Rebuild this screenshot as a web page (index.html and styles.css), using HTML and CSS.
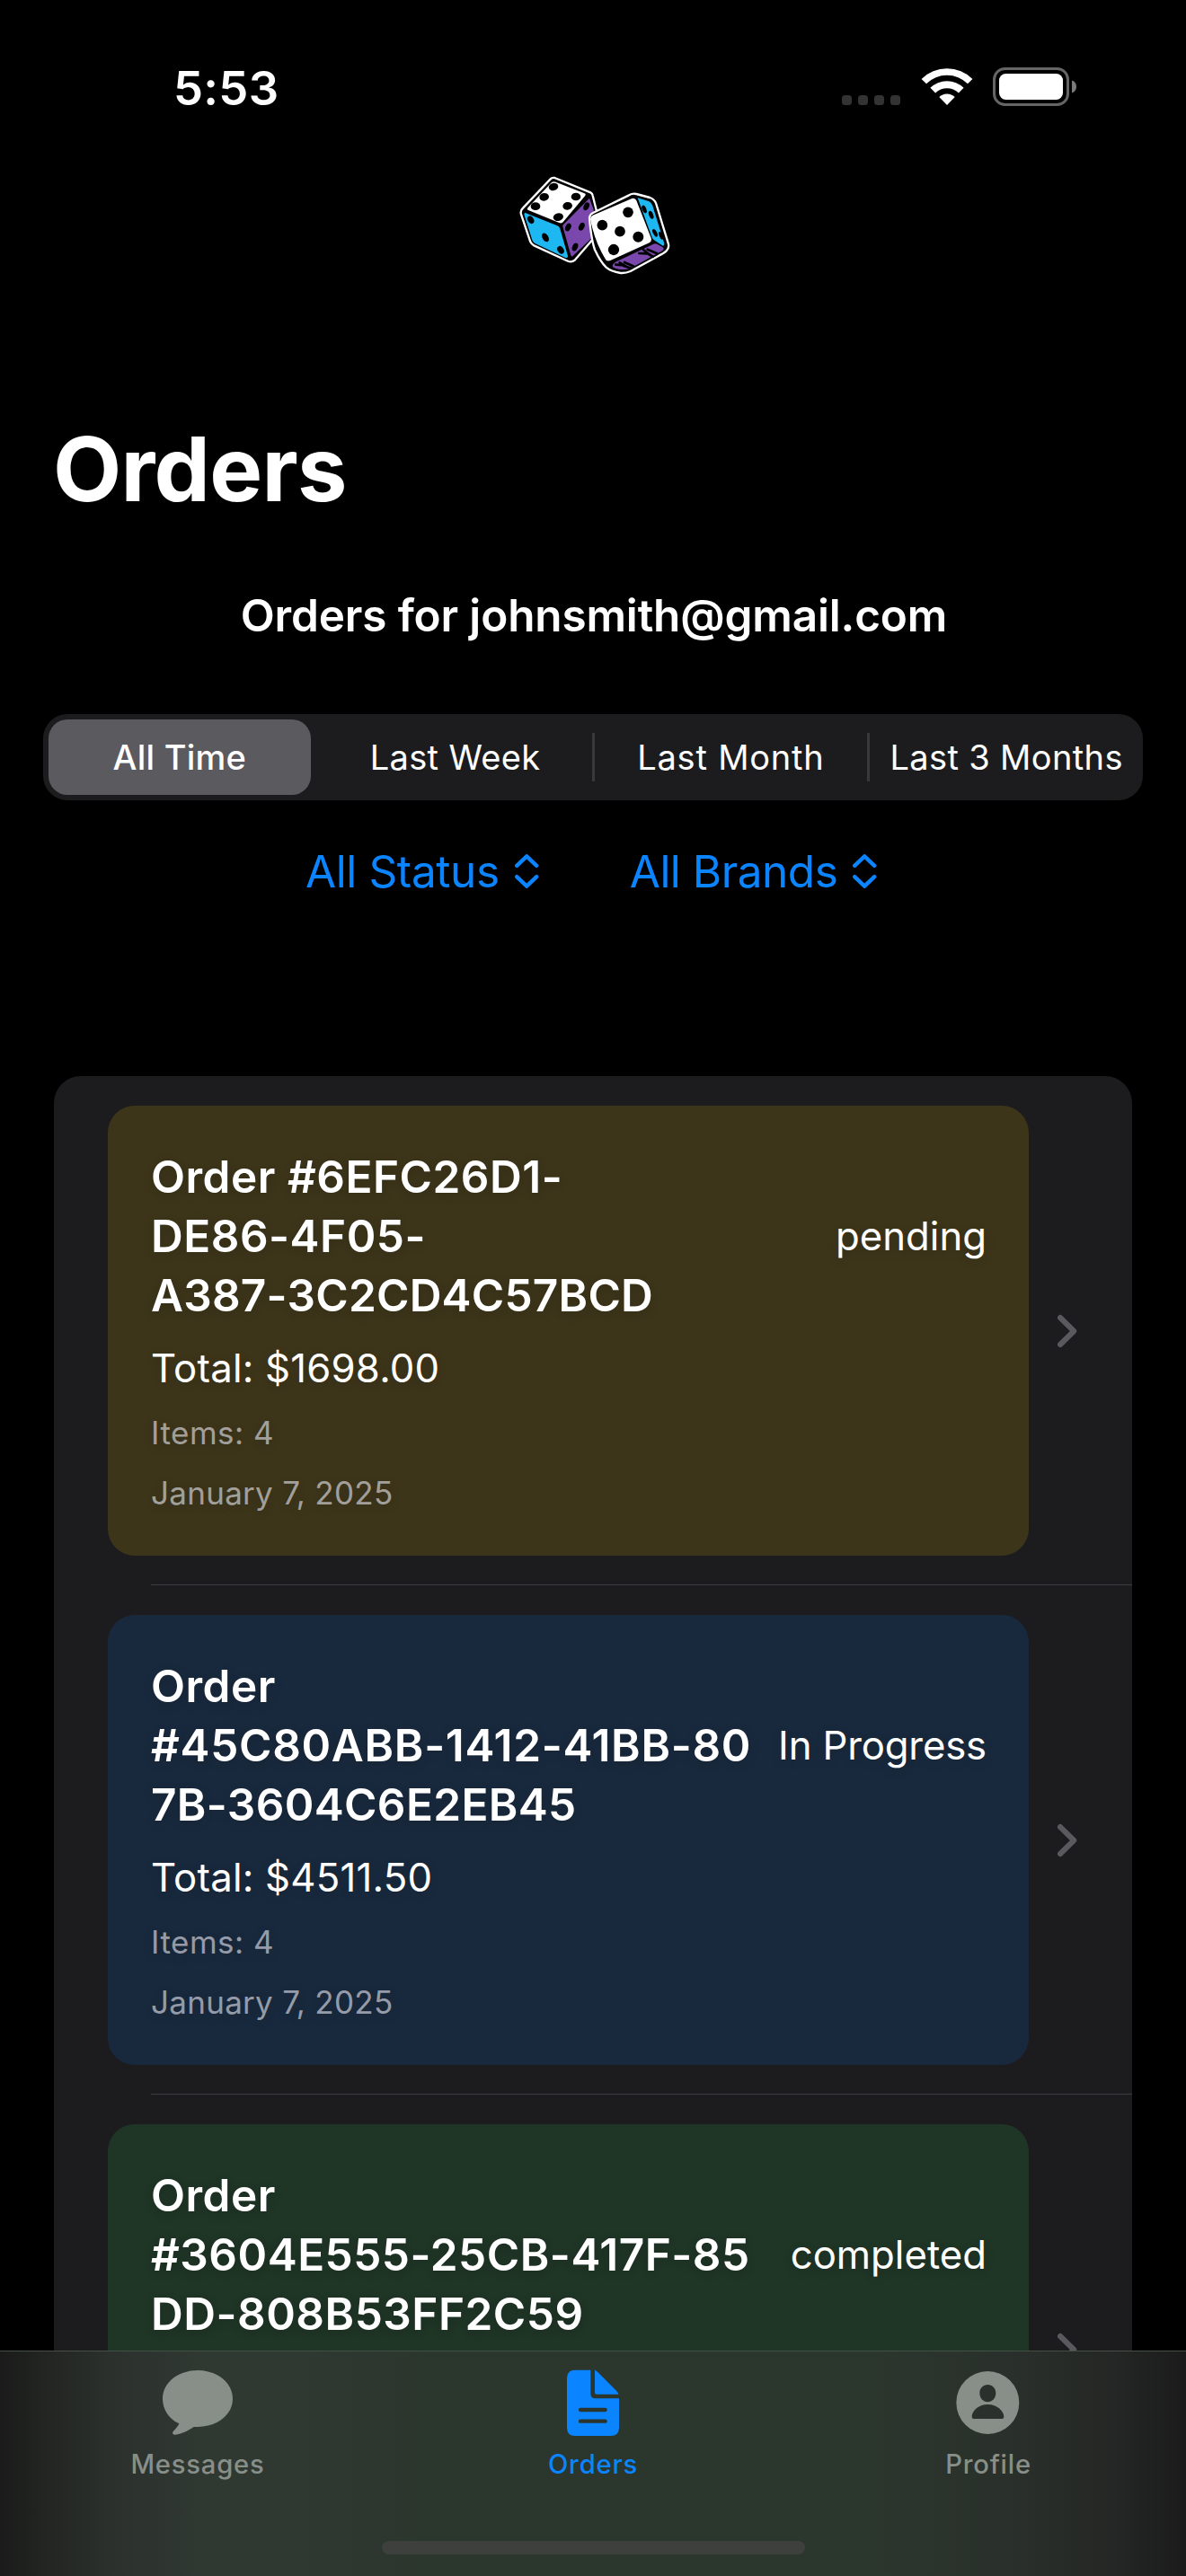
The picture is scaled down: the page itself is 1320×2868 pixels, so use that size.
FILE: index.html
```
<!DOCTYPE html>
<html lang="en">
<head>
<meta charset="utf-8">
<title>Orders</title>
<link rel="stylesheet" href="styles.css">
</head>
<body>
<div class="screen">
  <header class="status-bar">
    <span class="time">5:53</span>
    <div class="indicators">
      <svg class="signal" width="66" height="12" viewBox="0 0 66 12" fill="#333"><rect x="0" y="0" width="11" height="11" rx="3.5"/><rect x="18" y="0" width="11" height="11" rx="3.5"/><rect x="36" y="0" width="11" height="11" rx="3.5"/><rect x="54" y="0" width="11" height="11" rx="3.5"/></svg>
      <svg class="wifi" width="58" height="43" viewBox="0 0 58 43" fill="#fff"><path d="M.6 12.9 A40.5 40.5 0 0 1 57.400 12.900 L52 18.300 A32.600 32.600 0 0 0 6 18.300 Z"/><path d="M10.400 22.800 A26.500 26.500 0 0 1 47.600 22.800 L41.900 28.400 A18.500 18.500 0 0 0 16.100 28.400 Z"/><path d="M20.300 33 A12.500 12.500 0 0 1 37.700 33 L29 42 Z"/></svg>
      <svg class="battery" width="94" height="43" viewBox="0 0 94 43"><rect x="1.500" y="1.500" width="82" height="40" rx="12" fill="none" stroke="#656565" stroke-width="3"/><rect x="7" y="7" width="71" height="29" rx="7.500" fill="#fff"/><path d="M88 14.500 C91 15.500 93 18 93 21.500 S91 27.500 88 28.500Z" fill="#7b7b7b"/></svg>
    </div>
  </header>

  <svg class="logo" width="200" height="140" viewBox="0 0 600 420">
    <g stroke-linejoin="round">
      <path d="M160 56 Q165 53 172 54 L292 103 Q298 106 299 113 L312 165 L303 255 L240 328 Q230 337 218 333 L103 280 Q95 276 91 268 L60 176 Q56 164 66 155 Z" fill="#000" stroke="#fff" stroke-width="7"/>
      <path d="M162 69 Q169 65 176 68 L272 106 Q278 109 273 115 L200 202 Q195 207 187 204 L84 162 Q78 159 83 153 Z" fill="#fff"/>
      <path d="M72 170 L181 214 Q188 217 190 224 L216 314 Q217 323 208 321 L108 274 Q100 270 97 262 L70 176 Z" fill="#1db8f2"/>
      <path d="M288 122 L302 160 L303 248 L232 316 Q228 318 226 313 L199 217 Q198 212 202 209 Z" fill="#7a48ac"/>
      <g fill="#000">
        <ellipse cx="168" cy="84" rx="16" ry="12.500" transform="rotate(-12 168 84)"/><ellipse cx="137" cy="118" rx="16" ry="13" transform="rotate(-12 137 118)"/><ellipse cx="108" cy="149" rx="16" ry="13"/>
        <ellipse cx="243" cy="117" rx="16" ry="13"/><ellipse cx="215" cy="148" rx="16" ry="13" transform="rotate(-12 215 148)"/><ellipse cx="184" cy="185" rx="17" ry="13" transform="rotate(-12 184 185)"/>
        <ellipse cx="92" cy="194" rx="10" ry="14" transform="rotate(-30 92 194)"/><ellipse cx="141" cy="253" rx="10" ry="16" transform="rotate(-30 141 253)"/><ellipse cx="192" cy="295" rx="10" ry="14" transform="rotate(-32 192 295)"/>
        <ellipse cx="278" cy="149" rx="9" ry="14" transform="rotate(25 278 149)"/><ellipse cx="217" cy="219" rx="9" ry="14" transform="rotate(25 217 219)"/><ellipse cx="262" cy="217" rx="9" ry="14" transform="rotate(25 262 217)"/><ellipse cx="240" cy="285" rx="9" ry="14" transform="rotate(25 240 285)"/>
      </g>
      <path d="M288 188 Q289 176 300 171 L420 112 Q432 105 445 108 L490 120 Q503 124 510 138 L551 272 Q556 288 545 298 Q538 306 520 314 L425 366 Q410 373 392 372 Q360 367 344 353 Q325 335 306 294 Q294 260 288 188 Z" fill="#000" stroke="#fff" stroke-width="7"/>
      <path d="M291 192 Q291 183 299 179 L430 123 Q440 119 445 130 L494 255 Q497 266 488 271 L358 330 Q345 335 340 323 Q305 265 291 192 Z" fill="#fff"/>
      <path d="M449 121 L486 132 Q495 136 499 147 L537 270 Q540 285 530 279 L506 263 Q498 258 495 248 Z" fill="#1db8f2"/>
      <path d="M378 334 L500 276 Q507 272 514 275 L533 286 Q540 291 531 298 L425 356 Q412 361 395 360 Q375 359 366 351 Q362 344 378 334 Z" fill="#7a48ac"/>
      <g fill="#000">
        <circle cx="417" cy="169" r="17.500"/><circle cx="331" cy="212" r="17.500"/><circle cx="390" cy="233" r="17.500"/><circle cx="451" cy="251" r="18"/><circle cx="369" cy="294" r="18.500"/>
        <ellipse cx="471" cy="159" rx="7" ry="14" transform="rotate(-22 471 159)"/><ellipse cx="494" cy="178" rx="7" ry="14" transform="rotate(-22 494 178)"/><ellipse cx="507" cy="238" rx="6.500" ry="14" transform="rotate(-28 507 238)"/><ellipse cx="527" cy="247" rx="6" ry="14" transform="rotate(-22 527 247)"/>
      </g>
      <g stroke="#000" stroke-width="8" stroke-linecap="round"><path d="M389 337 L412 351 M376 344 L402 346 M405 336 L437 350 M400 347 L428 356 M468 294 L490 312 M454 306 L480 307 M482 293 L514 307 M478 303 L500 317"/></g>
    </g>
  </svg>

  <h1 class="page-title">Orders</h1>
  <h2 class="account">Orders for johnsmith@gmail.com</h2>

  <div class="segments">
    <div class="segment selected">All Time</div>
    <i class="divider hidden"></i>
    <div class="segment week">Last Week</div>
    <i class="divider"></i>
    <div class="segment month">Last Month</div>
    <i class="divider"></i>
    <div class="segment">Last 3 Months</div>
  </div>

  <div class="filters">
    <div class="filter"><span>All Status</span><svg width="27" height="38" viewBox="0 0 27 38"><path d="M2.200 12.800 L13.200 2.300 L24.200 12.800 M2.200 25.200 L13.200 35.700 L24.200 25.200"/></svg></div>
    <div class="filter brands"><span>All Brands</span><svg width="27" height="38" viewBox="0 0 27 38"><path d="M2.200 12.800 L13.200 2.300 L24.200 12.800 M2.200 25.200 L13.200 35.700 L24.200 25.200"/></svg></div>
  </div>

  <main class="order-list">
    <section class="order-row">
      <article class="card pending">
        <div class="card-head">
          <h3>Order #6EFC26D1-<br>DE86-4F05-<br><span class="tight">A387-3C2CD4C57BCD</span></h3>
          <span class="state">pending</span>
        </div>
        <p class="total">Total: $1698.00</p>
        <p class="meta items">Items: 4</p>
        <p class="meta">January 7, 2025</p>
      </article>
      <svg class="chevron" width="22" height="38" viewBox="0 0 22 38"><path d="M3 4 L18.200 19 L3 34"/></svg>
    </section>
    <hr class="separator">
    <section class="order-row">
      <article class="card progress">
        <div class="card-head">
          <h3>Order<br><span class="loose">#45C80ABB-1412-41BB-80</span><br><span class="even">7B-3604C6E2EB45</span></h3>
          <span class="state snug">In Progress</span>
        </div>
        <p class="total">Total: $4511.50</p>
        <p class="meta items">Items: 4</p>
        <p class="meta">January 7, 2025</p>
      </article>
      <svg class="chevron" width="22" height="38" viewBox="0 0 22 38"><path d="M3 4 L18.200 19 L3 34"/></svg>
    </section>
    <hr class="separator">
    <section class="order-row">
      <article class="card completed">
        <div class="card-head">
          <h3>Order<br>#3604E555-25CB-417F-85<br>DD-808B53FF2C59</h3>
          <span class="state">completed</span>
        </div>
      </article>
      <svg class="chevron" width="22" height="38" viewBox="0 0 22 38"><path d="M3 4 L18.200 19 L3 34"/></svg>
    </section>
  </main>

  <nav class="tab-bar">
    <div class="tabs">
      <a class="tab">
        <svg width="80" height="76" viewBox="0 0 240 228" fill="currentColor"><path d="M120 3 C185 3 237 44 237 98 C237 152 185 192 120 192 Q112 192 107 192 C90 203 68 216 45 218 C36 219 34 212 39 206 C48 197 55 189 58 181 C24 165 3 133 3 98 C3 44 55 3 120 3Z"/></svg>
        <span>Messages</span>
      </a>
      <a class="tab active">
        <svg width="60" height="76" viewBox="0 0 180 228" fill="currentColor"><path d="M30 2 H82 V80 Q82 97 98 97 H177 V194 Q177 222 149 222 H30 Q3 222 3 194 V30 Q3 2 30 2Z"/><path d="M96 2 Q101 4 106 9 L168 71 Q174 77 175 83 H102 Q96 83 96 77Z"/><path d="M48 135 H131 M48 173 H131" stroke="#2b352d" stroke-width="13" stroke-linecap="round"/></svg>
        <span>Orders</span>
      </a>
      <a class="tab">
        <svg width="72" height="76" viewBox="0 0 216 228" fill="currentColor"><path fill-rule="evenodd" d="M106 6 A105 105 0 1 0 106 216 A105 105 0 1 0 106 6Z M106 51 C121 51 133 63 133 79 C133 96 121 109 106 109 S79 96 79 79 C79 63 91 51 106 51Z M60 165 Q53 165 53 158 C53 140 74 117 106 117 S160 140 160 158 Q160 165 153 165Z"/></svg>
        <span>Profile</span>
      </a>
    </div>
    <div class="home-indicator"></div>
  </nav>
</div>
</body>
</html>
```
FILE: styles.css
```
* { box-sizing: border-box; margin: 0; padding: 0; }

body {
  background: #000;
  color: #fff;
  font-family: Inter, "Liberation Sans", sans-serif;
}

.screen {
  position: relative;
  width: 1320px;
  height: 2868px;
  overflow: hidden;
  display: flex;
  flex-direction: column;
}

svg { display: block; flex: none; }

.status-bar {
  display: flex;
  justify-content: space-between;
  height: 120px;
  flex: none;
  padding: 68px 121px 0 193px;
}
.time {
  font-size: 52.5px;
  line-height: 60px;
  font-weight: 600;
  letter-spacing: .3px;
}
.indicators {
  display: flex;
  align-items: flex-end;
  gap: 22px;
  height: 43px;
  margin-top: 7px;
}

.logo { margin: 60px 0 0 560px; }

.page-title {
  margin: 140px 0 0 59px;
  font-size: 99px;
  line-height: 124px;
  font-weight: 700;
  letter-spacing: -.78px;
}
.account {
  margin-top: 68px;
  padding-left: 2px;
  text-align: center;
  font-size: 49.5px;
  line-height: 66px;
  font-weight: 600;
  letter-spacing: -.16px;
}

.segments {
  display: flex;
  align-items: center;
  flex: none;
  width: 1224px;
  height: 96px;
  margin: 77px 48px 0;
  padding: 6px;
  border-radius: 27px;
  background: #1c1c1e;
}
.segment {
  flex: 1;
  display: flex;
  align-items: center;
  justify-content: center;
  height: 84px;
  font-size: 38px;
  white-space: nowrap;
  letter-spacing: .36px;
}
.segment.selected {
  border-radius: 21px;
  background: #5b5a5f;
  font-weight: 500;
  letter-spacing: .24px;
}
.segment.month { letter-spacing: .78px; }
.divider {
  width: 3px;
  height: 54px;
  margin: 0 6px;
  background: #39393c;
}
.divider.hidden { background: none; }

.filters {
  display: flex;
  flex: none;
  margin: 46px 0 0 340px;
  gap: 101px;
  color: #0a84ff;
  font-size: 49.5px;
  line-height: 66px;
  letter-spacing: -.39px;
}
.filter { display: flex; align-items: center; gap: 17px; }
.filter svg { fill: none; stroke: #0a84ff; stroke-width: 4.4; stroke-linecap: round; stroke-linejoin: round; }
.brands { letter-spacing: -.5px; }

.order-list {
  flex: none;
  width: 1200px;
  margin: 195px 60px 0;
  border-radius: 30px 30px 0 0;
  background: #1c1c1e;
}
.order-row {
  display: flex;
  align-items: center;
  gap: 32px;
  padding: 33px 0 32px 60px;
}
.separator {
  height: 1px;
  margin-left: 108px;
  border: 0;
  background: #3d3d41;
}
.card {
  width: 1025px;
  height: 501px;
  padding: 46px 47px 0 48px;
  border-radius: 30px;
  text-shadow: 0 3px 12px rgba(0, 0, 0, .16);
}
.card.pending { background: #3c351a; }
.card.progress { background: #19293d; }
.card.completed { background: #1f3526; }
.card-head {
  display: flex;
  align-items: center;
  justify-content: space-between;
}
.card h3 {
  font-size: 49.5px;
  line-height: 66px;
  font-weight: 600;
  letter-spacing: .5px;
  white-space: nowrap;
}
.card .tight { letter-spacing: .22px; }
.card .loose { letter-spacing: .68px; }
.card .even { letter-spacing: .35px; }
.state, .total { font-size: 43.7px; line-height: 60px; white-space: nowrap; }
.state { padding-top: 1px; }
.state.snug { letter-spacing: -.17px; }
.total { margin-top: 19px; letter-spacing: .22px; }
.meta {
  margin-top: 19px;
  font-size: 35px;
  line-height: 48px;
  letter-spacing: .28px;
  color: rgba(235, 235, 245, .6);
}
.meta.items { margin-top: 17px; letter-spacing: .5px; }
.chevron { fill: none; stroke: #5a5a5e; stroke-width: 6; stroke-linecap: round; stroke-linejoin: round; }

.tab-bar {
  position: absolute;
  left: 0;
  right: 0;
  bottom: 0;
  height: 251px;
  border-top: 1px solid #445046;
  background: linear-gradient(90deg, #1a1b1a 0, #222522 50px, #2b302c 120px, #303832 220px, #2f3831 330px, #2b362d 470px, #2b362d 980px, #2a302b 1120px, #242725 1240px, #1b1b1b 1320px);
}
.tabs { display: flex; padding-top: 20px; }
.tab {
  flex: 1;
  display: flex;
  flex-direction: column;
  align-items: center;
  gap: 12px;
  color: #878f88;
  font-size: 29.2px;
  line-height: 36px;
  font-weight: 500;
  letter-spacing: .8px;
}
.tab.active { color: #0a84ff; }
.home-indicator {
  width: 471px;
  height: 15px;
  margin: 67px 0 0 425px;
  border-radius: 8px;
  background: #3d403d;
}
```
